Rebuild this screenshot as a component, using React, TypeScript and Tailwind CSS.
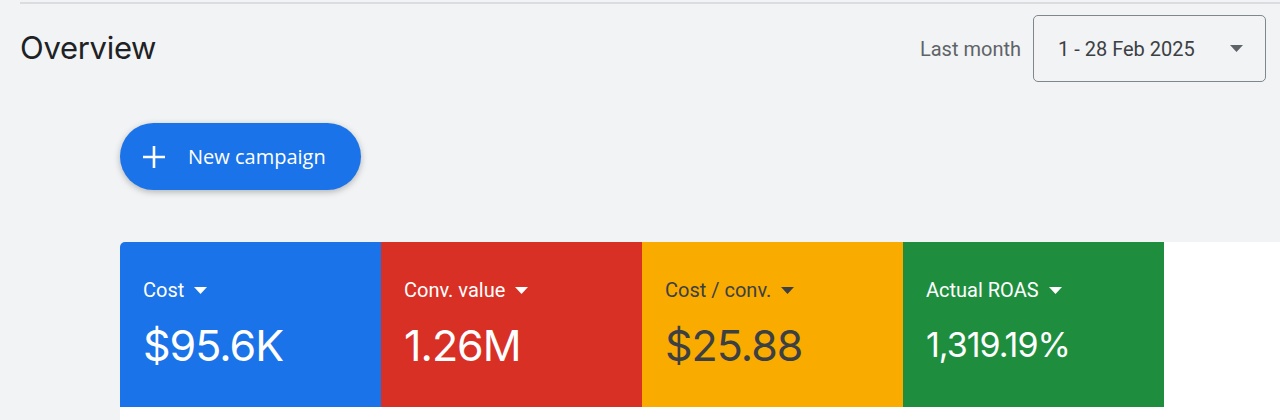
import React from 'react';

type Metric = {
	label: string;
	value: string;
	bg: string;
	text: string;
	size: string;
};

const metrics: Metric[] = [
	{ label: 'Cost', value: '$95.6K', bg: 'bg-[#1a73e8]', text: 'text-white', size: 'text-[43px]' },
	{ label: 'Conv. value', value: '1.26M', bg: 'bg-[#d93025]', text: 'text-white', size: 'text-[43px]' },
	{ label: 'Cost / conv.', value: '$25.88', bg: 'bg-[#f9ab00]', text: 'text-[#3c4043]', size: 'text-[43px]' },
	{ label: 'Actual ROAS', value: '1,319.19%', bg: 'bg-[#1e8e3e]', text: 'text-white', size: 'text-[34px]' },
];

function Caret({ className = '' }: { className?: string }) {
	return (
		<svg width="13" height="7" viewBox="0 0 13 7" className={className}>
			<path d="M0 0h13L6.5 7z" fill="currentColor" />
		</svg>
	);
}

export default function App() {
	return (
		<div className="w-[1280px] h-[420px] overflow-hidden bg-[#f1f3f4] font-['Roboto',sans-serif]">
			<div className="ml-5 mt-[2px] h-[2px] bg-[#dadce0]" />

			{/* header */}
			<div className="flex items-center justify-between pl-5 pr-[14px] pt-[11px]">
				<h1 className="text-[31px] text-[#202124] font-['Inter',sans-serif] tracking-[-0.3px]">Overview</h1>
				<div className="flex items-center gap-3">
					<span className="text-[20px] text-[#5f6368]">Last month</span>
					<button className="flex items-center justify-between w-[233px] h-[67px] pl-6 pr-[22px] border border-[#80868b] rounded-[5px] text-[20px] text-[#3c4043]">
						<span>1 - 28 Feb 2025</span>
						<Caret className="text-[#5f6368]" />
					</button>
				</div>
			</div>

			{/* new campaign */}
			<div className="pl-[120px] pt-[41px]">
				<button className="flex items-center gap-[22px] h-[67px] w-[241px] pl-[22px] rounded-full bg-[#1a73e8] text-white text-[20px] font-medium font-['Open_Sans',sans-serif] shadow-[0_2px_6px_rgba(60,64,67,0.35)]">
					<svg width="24" height="24" viewBox="0 0 24 24">
						<path d="M12 1v22M1 12h22" stroke="currentColor" strokeWidth="2.6" />
					</svg>
					<span>New campaign</span>
				</button>
			</div>

			{/* scorecards */}
			<div className="ml-[120px] mt-[52px] bg-white rounded-tl-[5px] overflow-hidden h-[200px]">
				<div className="flex">
					{metrics.map((m) => (
						<div key={m.label} className={`w-[261px] h-[165px] pl-[23px] pt-[37px] ${m.bg} ${m.text}`}>
							<div className="flex items-center gap-[10px] text-[20px] leading-[22px]">
								<span>{m.label}</span>
								<Caret />
							</div>
							<div className={`mt-[19px] leading-[50px] font-['Inter',sans-serif] tracking-[-1px] ${m.size}`}>{m.value}</div>
						</div>
					))}
				</div>
			</div>
		</div>
	);
}
